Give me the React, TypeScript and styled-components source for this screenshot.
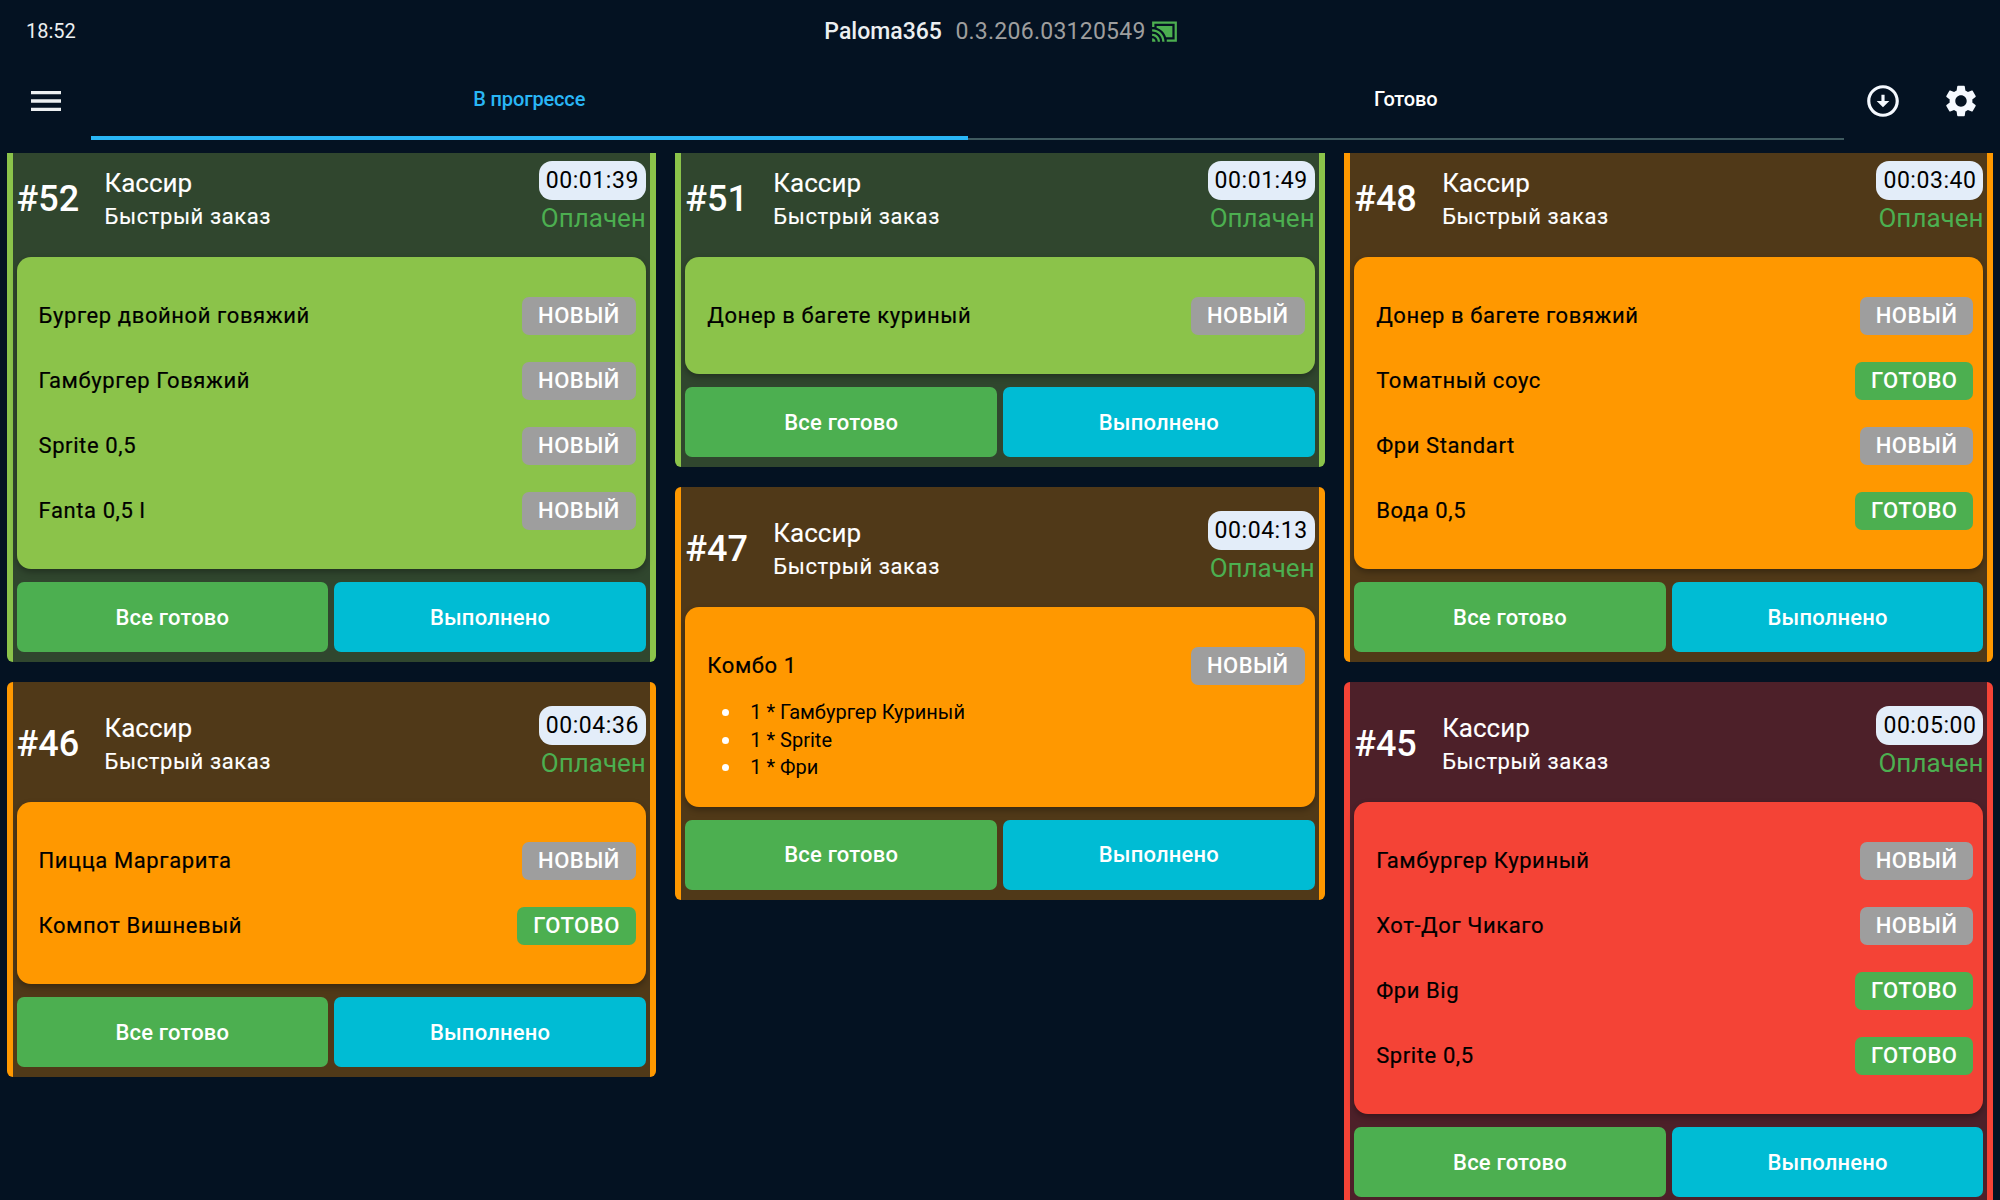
import React from 'react'
import styled, { createGlobalStyle } from 'styled-components'

type Tone = 'green' | 'orange' | 'red'
type Status = 'new' | 'ready'

const accent: Record<Tone, string> = { green: '#8bc34a', orange: '#ff9800', red: '#f44336' }
const tint: Record<Tone, string> = { green: '#30462e', orange: '#503918', red: '#4d2029' }

interface Item {
    name: string
    status: Status
    parts?: string[]
}

interface Order {
    id: number
    time: string
    tone: Tone
    items: Item[]
}

const columns: Order[][] = [
    [
        {
            id: 52, time: '00:01:39', tone: 'green', items: [
                { name: 'Бургер двойной говяжий', status: 'new' },
                { name: 'Гамбургер Говяжий', status: 'new' },
                { name: 'Sprite 0,5', status: 'new' },
                { name: 'Fanta 0,5 l', status: 'new' },
            ]
        },
        {
            id: 46, time: '00:04:36', tone: 'orange', items: [
                { name: 'Пицца Маргарита', status: 'new' },
                { name: 'Компот Вишневый', status: 'ready' },
            ]
        },
    ],
    [
        {
            id: 51, time: '00:01:49', tone: 'green', items: [
                { name: 'Донер в багете куриный', status: 'new' },
            ]
        },
        {
            id: 47, time: '00:04:13', tone: 'orange', items: [
                { name: 'Комбо 1', status: 'new', parts: ['1 * Гамбургер Куриный', '1 * Sprite', '1 * Фри'] },
            ]
        },
    ],
    [
        {
            id: 48, time: '00:03:40', tone: 'orange', items: [
                { name: 'Донер в багете говяжий', status: 'new' },
                { name: 'Томатный соус', status: 'ready' },
                { name: 'Фри Standart', status: 'new' },
                { name: 'Вода 0,5', status: 'ready' },
            ]
        },
        {
            id: 45, time: '00:05:00', tone: 'red', items: [
                { name: 'Гамбургер Куриный', status: 'new' },
                { name: 'Хот-Дог Чикаго', status: 'new' },
                { name: 'Фри Big', status: 'ready' },
                { name: 'Sprite 0,5', status: 'ready' },
            ]
        },
    ],
]

const OrderCard = ({ order }: { order: Order }) => (
    <Card $tone={order.tone}>
        <CardHeader>
            <OrderNumber>#{order.id}</OrderNumber>
            <Who>
                <Cashier>Кассир</Cashier>
                <OrderType>Быстрый заказ</OrderType>
            </Who>
            <Meta>
                <Timer>{order.time}</Timer>
                <Paid>Оплачен</Paid>
            </Meta>
        </CardHeader>
        <ItemsPanel $tone={order.tone}>
            {order.items.map((item) => (
                <div key={item.name}>
                    <ItemRow>
                        <ItemName>{item.name}</ItemName>
                        <Badge $status={item.status}>{item.status === 'new' ? 'НОВЫЙ' : 'ГОТОВО'}</Badge>
                    </ItemRow>
                    {item.parts && (
                        <Parts>
                            {item.parts.map((part) => <li key={part}>{part}</li>)}
                        </Parts>
                    )}
                </div>
            ))}
        </ItemsPanel>
        <Actions>
            <ActionButton $bg="#4caf50">Все готово</ActionButton>
            <ActionButton $bg="#00bcd4">Выполнено</ActionButton>
        </Actions>
    </Card>
)

const App = () => {
    return (
        <Screen>
            <GlobalStyle />
            <StatusBar>
                <Clock>18:52</Clock>
                <Title>
                    <AppName>Paloma365</AppName>
                    <Version>0.3.206.03120549</Version>
                    <svg width="27" height="27" viewBox="0 0 24 24" fill="#4caf50">
                        <path d="M1 18v3h3c0-1.66-1.34-3-3-3zm0-4v2c2.76 0 5 2.24 5 5h2c0-3.87-3.13-7-7-7zm18-7H5v1.63c3.96 1.28 7.09 4.41 8.37 8.37H19V7zM1 10v2c4.97 0 9 4.03 9 9h2c0-6.08-4.93-11-11-11zm22-7H1v5h2V5h18v14h-7v2h9V3z" />
                    </svg>
                </Title>
            </StatusBar>
            <NavBar>
                <IconSlot $width={91}>
                    <svg width="40" height="40" viewBox="0 0 24 24" fill="#eceff1">
                        <path d="M3 18h18v-2H3v2zm0-5h18v-2H3v2zm0-7v2h18V6H3z" />
                    </svg>
                </IconSlot>
                <Tabs>
                    <Tab $active>В прогрессе</Tab>
                    <Tab>Готово</Tab>
                </Tabs>
                <IconSlot $width={78}>
                    <svg width="38" height="38" viewBox="0 0 24 24" fill="#f5f9ff">
                        <path d="M12,4c4.41,0,8,3.59,8,8s-3.59,8-8,8s-8-3.59-8-8S7.59,4,12,4 M12,2C6.48,2,2,6.48,2,12c0,5.52,4.48,10,10,10c5.52,0,10-4.48,10-10 C22,6.48,17.52,2,12,2L12,2z M13,12l0-4h-2l0,4H8l4,4l4-4H13z" />
                    </svg>
                </IconSlot>
                <IconSlot $width={78}>
                    <svg width="38" height="38" viewBox="0 0 24 24" fill="#f5f9ff">
                        <path d="M19.14 12.94c.04-.3.06-.61.06-.94 0-.32-.02-.64-.07-.94l2.03-1.58c.18-.14.23-.41.12-.61l-1.92-3.32c-.12-.22-.37-.29-.59-.22l-2.39.96c-.5-.38-1.03-.7-1.62-.94l-.36-2.54c-.04-.24-.24-.41-.48-.41h-3.84c-.24 0-.43.17-.47.41l-.36 2.54c-.59.24-1.13.57-1.62.94l-2.39-.96c-.22-.08-.47 0-.59.22L2.74 8.87c-.12.21-.08.47.12.61l2.03 1.58c-.05.3-.09.63-.09.94s.02.64.07.94l-2.03 1.58c-.18.14-.23.41-.12.61l1.92 3.32c.12.22.37.29.59.22l2.39-.96c.5.38 1.03.7 1.62.94l.36 2.54c.05.24.24.41.48.41h3.84c.24 0 .44-.17.47-.41l.36-2.54c.59-.24 1.13-.56 1.62-.94l2.39.96c.22.08.47 0 .59-.22l1.92-3.32c.12-.22.07-.47-.12-.61l-2.01-1.58zM12 15.6c-1.98 0-3.6-1.62-3.6-3.6s1.62-3.6 3.6-3.6 3.6 1.62 3.6 3.6-1.62 3.6-3.6 3.6z" />
                    </svg>
                </IconSlot>
            </NavBar>
            <Board>
                <Columns>
                    {columns.map((orders) => (
                        <Column key={orders[0].id}>
                            {orders.map((order) => <OrderCard key={order.id} order={order} />)}
                        </Column>
                    ))}
                </Columns>
            </Board>
        </Screen>
    )
}

export default App

const GlobalStyle = createGlobalStyle`
body {
    margin: 0;
    background: #041222;
    font-family: Roboto, "Noto Sans", sans-serif;
}
`

const Screen = styled.div`
width: 2000px;
height: 1200px;
overflow: hidden;
display: flex;
flex-direction: column;
background: #041222;
`

const StatusBar = styled.div`
height: 62px;
flex: none;
display: grid;
grid-template-columns: 1fr auto 1fr;
align-items: center;
padding-left: 26px;
`

const Clock = styled.div`
color: #eceff1;
font-size: 20px;
`

const Title = styled.div`
display: flex;
align-items: center;
grid-column: 2;
margin-right: 24px;
`

const AppName = styled.span`
color: #eceff1;
font-size: 23px;
font-weight: 500;
margin-right: 13.5px;
`

const Version = styled.span`
color: #9e9e9e;
font-size: 23px;
letter-spacing: 0.25px;
margin-right: 5px;
`

const NavBar = styled.div`
height: 78px;
flex: none;
display: flex;
align-items: center;
`

const IconSlot = styled.div<{ $width: number }>`
width: ${({ $width }) => $width}px;
flex: none;
display: flex;
justify-content: center;
align-items: center;
`

const Tabs = styled.div`
flex: 1;
align-self: stretch;
display: grid;
grid-template-columns: 1fr 1fr;
border-bottom: 2px solid #3f5a5f;
`

const Tab = styled.div<{ $active?: boolean }>`
display: flex;
justify-content: center;
align-items: center;
font-size: 20px;
font-weight: 500;
letter-spacing: -0.15px;
margin-bottom: -2px;
color: ${({ $active }) => $active ? '#29b6f6' : '#ffffff'};
border-bottom: 4px solid ${({ $active }) => $active ? '#29b6f6' : 'transparent'};
`

const Board = styled.div`
flex: 1;
margin-top: 13px;
overflow: hidden;
`

const Columns = styled.div`
margin-top: -16px;
padding: 0 6.5px;
display: grid;
grid-template-columns: repeat(3, 1fr);
column-gap: 19.5px;
align-items: start;
`

const Column = styled.div`
display: flex;
flex-direction: column;
gap: 20px;
`

const Card = styled.div<{ $tone: Tone }>`
background: ${({ $tone }) => tint[$tone]};
border-left: 6px solid ${({ $tone }) => accent[$tone]};
border-right: 6px solid ${({ $tone }) => accent[$tone]};
border-radius: 6px;
padding: 0 4px 10px;
`

const CardHeader = styled.div`
height: 120px;
display: flex;
align-items: center;
`

const OrderNumber = styled.div`
width: 88px;
flex: none;
margin-top: 3px;
color: #ffffff;
font-size: 36px;
font-weight: 500;
`

const Who = styled.div`
flex: 1;
margin-top: 6px;
color: #ffffff;
-webkit-text-stroke: 0.15px #ffffff;
`

const Cashier = styled.div`
font-size: 26px;
line-height: 33px;
`

const OrderType = styled.div`
font-size: 22px;
line-height: 33px;
letter-spacing: 0.6px;
`

const Meta = styled.div`
margin-top: 3px;
display: flex;
flex-direction: column;
align-items: flex-end;
`

const Timer = styled.div`
height: 39px;
width: 107px;
padding-top: 1px;
box-sizing: border-box;
display: flex;
justify-content: center;
align-items: center;
background: #e3edf9;
border-radius: 13px;
color: #000000;
font-size: 23px;
letter-spacing: 0.55px;
`

const Paid = styled.div`
color: #4caf50;
font-size: 26px;
line-height: 37px;
`

const ItemsPanel = styled.div<{ $tone: Tone }>`
background: ${({ $tone }) => accent[$tone]};
border-radius: 14px;
padding: 26px 10px 26px 22px;
box-shadow: 0 3px 6px rgba(0, 0, 0, 0.3);
`

const ItemRow = styled.div`
height: 65px;
display: flex;
justify-content: space-between;
align-items: center;
`

const ItemName = styled.div`
color: #000000;
font-size: 22px;
letter-spacing: 0.6px;
-webkit-text-stroke: 0.2px #000000;
`

const Badge = styled.div<{ $status: Status }>`
height: 38px;
padding: 0 16px;
display: flex;
align-items: center;
border-radius: 7px;
color: #ffffff;
font-size: 22px;
font-weight: 500;
letter-spacing: 0.5px;
background: ${({ $status }) => $status === 'new' ? '#9e9e9e' : '#4caf50'};
`

const Parts = styled.ul`
margin: 0;
padding: 0 0 0 43px;
color: #000000;
font-size: 20px;
line-height: 27.5px;
list-style: none;
li {
    position: relative;
    top: 1px;
}
li::before {
    content: "";
    position: absolute;
    left: -28px;
    top: 10px;
    width: 7px;
    height: 7px;
    border-radius: 50%;
    background: #ffffff;
}
`

const Actions = styled.div`
margin-top: 13px;
display: grid;
grid-template-columns: 1fr 1fr;
gap: 6px;
`

const ActionButton = styled.button<{ $bg: string }>`
height: 70px;
border: 0;
border-radius: 7px;
background: ${({ $bg }) => $bg};
color: #ffffff;
font-family: Roboto, "Noto Sans", sans-serif;
font-size: 22px;
font-weight: 500;
letter-spacing: 0.2px;
`
